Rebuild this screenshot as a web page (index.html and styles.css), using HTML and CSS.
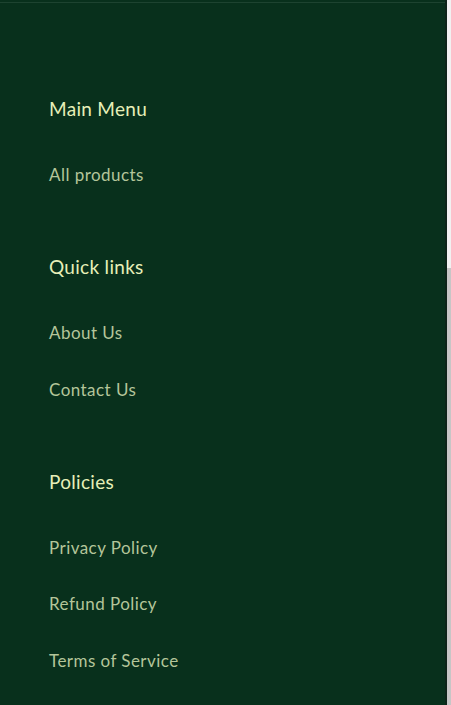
FILE: index.html
```html
<!DOCTYPE html>
<html lang="en">
<head>
    <meta charset="UTF-8">
    <meta name="viewport" content="width=device-width, initial-scale=1.0">
    <title>Footer</title>
    <link rel="stylesheet" href="styles.css">
</head>
<body>
    <footer class="footer">
        <div class="footer-block">
            <h2 class="footer-heading">Main Menu</h2>
            <ul class="footer-links">
                <li><a href="#">All products</a></li>
            </ul>
        </div>
        <div class="footer-block">
            <h2 class="footer-heading">Quick links</h2>
            <ul class="footer-links">
                <li><a href="#">About Us</a></li>
                <li><a href="#">Contact Us</a></li>
            </ul>
        </div>
        <div class="footer-block">
            <h2 class="footer-heading">Policies</h2>
            <ul class="footer-links">
                <li><a href="#">Privacy Policy</a></li>
                <li><a href="#">Refund Policy</a></li>
                <li><a href="#">Terms of Service</a></li>
            </ul>
        </div>
    </footer>

    <div class="scrollbar">
        <div class="scrollbar-thumb"></div>
    </div>
</body>
</html>
```

FILE: styles.css
```css
body {
    font-family: Lato, "Noto Sans", sans-serif;
    background-color: #08301c;
    margin: 0;
    height: 705px;
    overflow: hidden;
}
.footer {
    border-top: 1px solid #1d4330;
    margin-top: 2px;
    padding: 94px 0 0 49px;
    display: flex;
    flex-direction: column;
    gap: 68px;
}
.footer-heading {
    margin: 0 0 42px;
    font-size: 19px;
    font-weight: 400;
    line-height: 24px;
    letter-spacing: 0.3px;
    color: #e6efb8;
}
.footer-links {
    list-style: none;
    margin: 0;
    padding: 0;
    display: flex;
    flex-direction: column;
    gap: 32.5px;
}
.footer-links a {
    display: block;
    font-size: 17px;
    line-height: 24px;
    letter-spacing: 0.45px;
    color: #b4c59a;
    text-decoration: none;
}
.scrollbar {
    position: fixed;
    top: 0;
    right: 0;
    width: 4px;
    height: 100%;
    background-color: #f1f1f1;
    border-left: 2px solid #0d2419;
}
.scrollbar-thumb {
    margin-top: 268px;
    height: 437px;
    background-color: #c6c6c6;
}
```
